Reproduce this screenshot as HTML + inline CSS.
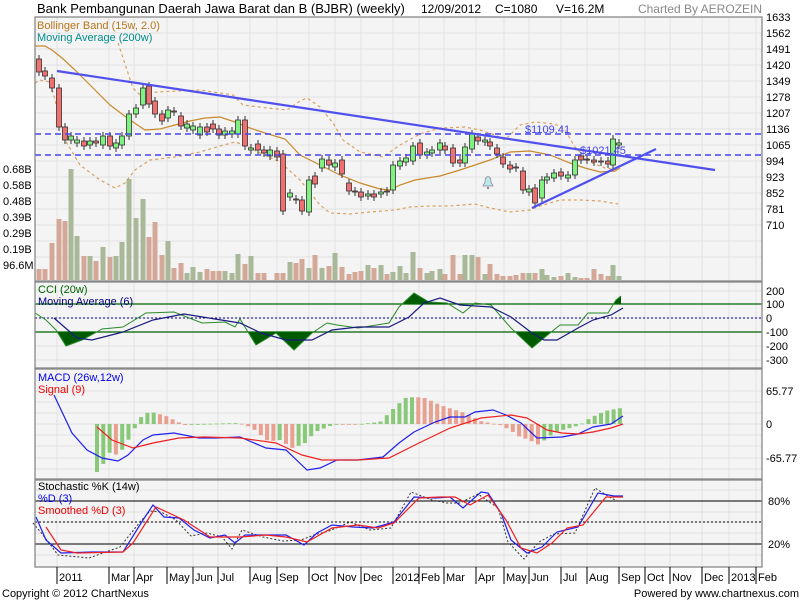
<!DOCTYPE html>
<html><head><meta charset="utf-8"><style>
html,body{margin:0;padding:0;background:#fff;width:800px;height:600px;overflow:hidden}
svg{display:block;font-family:"Liberation Sans",sans-serif}
</style></head><body>
<svg id="s" width="800" height="600" xmlns="http://www.w3.org/2000/svg"></svg>
<script>
var S=document.getElementById('s');var out=[];
function A(t){out.push(t);}
var L=35,R=762;
var P=[[17,281],[282,368],[369,479],[480,567]];
P.forEach(function(p){A('<rect x="'+L+'" y="'+p[0]+'" width="'+(R-L)+'" height="'+(p[1]-p[0])+'" fill="#f4f4f4"/>');});
var VG=[57,109,134,167,193,218,250,277,309,335,361,393,419,444,476,504,529,561,587,619,645,670,702,729,756];
VG.forEach(function(x){A('<line x1="'+x+'" y1="17" x2="'+x+'" y2="567" stroke="#e2e2e2" stroke-width="1"/>');});
for(var i=0;i<16;i++){var y=17+i*16;if(y<281)A('<line x1="'+L+'" y1="'+y+'" x2="'+R+'" y2="'+y+'" stroke="#e2e2e2"/>');}
[291,304,318,332,346,360].forEach(function(y){A('<line x1="'+L+'" y1="'+y+'" x2="'+R+'" y2="'+y+'" stroke="#e2e2e2"/>');});
[391,402,413,424,435,446,458,469].forEach(function(y){A('<line x1="'+L+'" y1="'+y+'" x2="'+R+'" y2="'+y+'" stroke="#e2e2e2"/>');});
[490,501,512,522,533,544,555].forEach(function(y){A('<line x1="'+L+'" y1="'+y+'" x2="'+R+'" y2="'+y+'" stroke="#e2e2e2"/>');});
function pl(pts,st,w,extra){return '<polyline fill="none" stroke="'+st+'" stroke-width="'+w+'" '+(extra||'')+' points="'+pts.map(function(p){return p.join(',')}).join(' ')+'"/>';}
var C=[[39,59,72,'r'],[45,71,76,'r'],[52,78,88,'r'],[59,88,127,'r'],[65,127,140,'r'],[71,136,140,'g'],[77,140,143,'g'],[84,141,146,'r'],[90,141,145,'g'],[96,141,143,'r'],[103,136,145,'g'],[110,136,146,'r'],[116,143,148,'g'],[122,136,145,'g'],[129,114,136,'g'],[136,108,114,'g'],[143,88,105,'g'],[149,86,104,'r'],[155,101,114,'r'],[162,114,121,'r'],[168,110,118,'g'],[174,111,112,'r'],[181,116,126,'r'],[187,124,128,'g'],[193,126,130,'g'],[200,127,135,'g'],[207,127,132,'r'],[213,124,129,'r'],[219,129,135,'r'],[225,131,135,'g'],[232,131,134,'g'],[238,120,134,'g'],[245,120,146,'r'],[251,148,150,'g'],[258,144,150,'r'],[264,150,153,'r'],[270,150,156,'g'],[277,151,157,'r'],[283,154,211,'r'],[290,193,197,'g'],[296,199,200,'r'],[302,200,211,'r'],[309,180,212,'g'],[315,176,184,'r'],[322,159,168,'g'],[329,160,165,'r'],[335,163,167,'g'],[342,160,174,'r'],[349,183,191,'r'],[355,191,192,'r'],[361,192,197,'r'],[368,194,196,'g'],[374,194,197,'r'],[381,192,194,'g'],[387,191,192,'r'],[393,165,190,'g'],[400,161,166,'g'],[406,158,162,'g'],[413,146,161,'g'],[420,143,155,'r'],[427,152,155,'g'],[432,150,153,'g'],[440,143,150,'g'],[445,146,150,'r'],[453,148,163,'r'],[460,160,163,'r'],[465,147,163,'g'],[472,134,149,'g'],[478,137,141,'r'],[485,140,142,'g'],[490,142,146,'r'],[497,148,154,'r'],[503,157,164,'r'],[510,165,169,'r'],[516,167,168,'r'],[523,171,190,'r'],[529,189,192,'g'],[535,188,203,'r'],[542,180,198,'g'],[547,177,180,'g'],[554,173,178,'g'],[561,172,176,'r'],[568,175,178,'g'],[575,160,175,'g'],[581,156,160,'r'],[587,159,160,'r'],[594,160,162,'r'],[601,161,162,'r'],[608,161,164,'r'],[613,139,165,'g'],[619,143,145,'g']];
var V={39:269,45:269,52:243,59:219,65:221,71:169,77:236,84:256,90:256,96:261,103:247,110:257,116:256,122:242,129:179,136:218,143:199,149:237,155:222,162:255,168:241,174:268,181:263,187:273,193:267,200:272,207:269,213:271,219:271,225:271,232:273,238:254,245:264,251:256,258:273,264:273,277:273,283:273,290:262,296:263,302:259,309:268,315:255,322:268,329:266,335:253,342:267,349:274,355:272,361:271,368:265,374:268,381:265,387:274,393:272,400:266,406:273,413:252,420:268,427:273,432:271,440:269,445:274,453:255,460:274,465:255,472:255,478:257,485:274,490:264,497:274,503:276,510:276,516:275,523:273,529:273,535:273,542:269,547:275,554:277,561:276,568:273,575:277,581:278,587:278,594:269,601:274,608:276,613:265,619:276};
C.forEach(function(c){var t=V[c[0]];if(t){A('<rect x="'+(c[0]-2.5)+'" y="'+t+'" width="5" height="'+(280-t)+'" fill="'+(c[3]=='g'?'#a8b898':'#d4a898')+'"/>');}});
var mid=[[35,46],[45,46],[52,50],[62,58],[75,70],[90,85],[110,105],[130,120],[145,130],[160,129],[175,125],[190,121],[205,118],[220,117],[235,122],[250,128],[265,133],[285,139],[300,155],[320,165],[340,175],[360,183],[380,189],[390,190],[400,185],[415,180],[440,176],[460,170],[475,165],[490,160],[510,152],[530,151],[550,155],[570,163],[585,168],[600,172],[615,171],[620,168]];
A(pl(mid,'#c8892c',1.2));
var low=[[35,83],[40,80],[50,82],[55,100],[65,140],[80,165],[100,180],[115,188],[125,183],[135,170],[150,160],[175,157],[200,152],[220,146],[235,142],[245,145],[260,153],[280,162],[300,180],[320,205],[330,213],[350,214],[370,212],[395,210],[410,207],[430,206],[450,206],[475,204],[490,208],[510,212],[530,210],[540,206],[560,200],[580,200],[600,201],[618,204]];
A(pl(low,'#d9a060',1.2,'stroke-dasharray="3,3"'));
var up=[[118,43],[127,70],[133,88],[140,95],[157,92],[200,90],[233,95],[243,105],[267,108],[287,110],[300,101],[307,98],[320,107],[333,123],[343,140],[360,152],[383,157],[400,145],[420,134],[440,128],[465,127],[480,130],[495,135],[505,140],[520,125],[535,122],[555,124],[565,130],[575,147],[590,162],[605,168],[620,170]];
A(pl(up,'#d9a060',1.2,'stroke-dasharray="3,3"'));
C.forEach(function(c){var x=c[0],a=c[1],b=c[2];A('<line x1="'+x+'" y1="'+(a-4)+'" x2="'+x+'" y2="'+(b+4)+'" stroke="#333"/>');A('<rect x="'+(x-2.5)+'" y="'+a+'" width="5" height="'+Math.max(1,b-a)+'" fill="'+(c[3]=='g'?'#80f080':'#f07070')+'" stroke="#333" stroke-width="0.8"/>');});
A('<line x1="'+L+'" y1="134" x2="'+R+'" y2="134" stroke="#4444ee" stroke-width="1.5" stroke-dasharray="6,4"/>');
A('<line x1="'+L+'" y1="155" x2="'+R+'" y2="155" stroke="#4444ee" stroke-width="1.5" stroke-dasharray="6,4"/>');
A('<line x1="57" y1="71" x2="715" y2="170" stroke="#5050ee" stroke-width="2.2"/>');
A('<line x1="532" y1="208" x2="656" y2="149" stroke="#5050ee" stroke-width="2.2"/>');
A('<text x="525" y="133" font-size="11" fill="#4444ee">$1109.41</text>');
A('<text x="580" y="154" font-size="11" fill="#4444ee">$1021.45</text>');
A('<path d="M483,186 L485,182 Q485,177 488,176.5 Q491,177 491,182 L493,186 Z" fill="#bde8ea" stroke="#889" stroke-width="0.8"/><circle cx="488" cy="188" r="1.2" fill="#889"/>');
A('<text x="37" y="29" font-size="11" fill="#b8761e">Bollinger Band (15w, 2.0)</text>');
A('<text x="37" y="41" font-size="11" fill="#008b8b">Moving Average (200w)</text>');
var cci=[[35,313],[46,320],[56,330],[66,346],[82,340],[95,333],[102,329],[123,327],[146,313],[174,312],[202,323],[225,322],[235,327],[240,319],[256,345],[276,333],[294,350],[312,333],[327,323],[337,325],[358,328],[389,323],[399,307],[414,293],[429,302],[447,303],[463,313],[475,303],[491,305],[511,328],[532,348],[550,333],[560,325],[578,325],[588,313],[608,313],[616,300],[621,296]];
A('<defs><clipPath id="ca"><rect x="35" y="282" width="727" height="22"/></clipPath><clipPath id="cb"><rect x="35" y="332" width="727" height="36"/></clipPath></defs>');
var cp=cci.map(function(p){return p.join(',')}).join(' ');
A('<polygon clip-path="url(#ca)" fill="#005a00" points="35,304 '+cp+' 621,304"/>');
A('<polygon clip-path="url(#cb)" fill="#005a00" points="35,332 '+cp+' 621,332"/>');
A('<line x1="'+L+'" y1="304" x2="'+R+'" y2="304" stroke="#006400" stroke-width="1.3"/>');
A('<line x1="'+L+'" y1="332" x2="'+R+'" y2="332" stroke="#006400" stroke-width="1.3"/>');
A('<line x1="'+L+'" y1="318" x2="'+R+'" y2="318" stroke="#000080" stroke-dasharray="2,2"/>');
A(pl(cci,'#2a8a2a',1));
A(pl([[54,318],[77,338],[92,340],[123,332],[153,320],[184,314],[215,319],[240,323],[261,333],[286,340],[312,340],[332,330],[358,327],[389,327],[409,317],[424,303],[440,298],[460,305],[491,307],[511,317],[532,333],[544,340],[557,340],[578,328],[593,320],[611,315],[623,308]],'#1a1a80',1.2));
A('<text x="38" y="293" font-size="11" fill="#006400">CCI (20w)</text>');
A('<text x="38" y="305" font-size="11" fill="#000080">Moving Average (6)</text>');
var hk=[[97,472],[104,463],[110,452],[117,455],[124,448],[130,437],[136,426],[140,418],[146,413],[152,412],[159,414],[166,416],[172,419],[178,422],[185,425],[200,424],[240,423],[250,427],[258,432],[265,440],[272,441],[280,440],[292,448],[298,446],[305,443],[315,432],[325,428],[335,424],[360,424],[380,422],[392,410],[405,398],[415,397],[425,398],[440,405],[452,409],[465,413],[480,421],[500,425],[510,430],[520,437],[530,440],[537,445],[545,440],[555,432],[570,428],[580,425],[590,418],[605,411],[621,408]];
function hv(x){for(var i=0;i<hk.length-1;i++){if(x>=hk[i][0]&&x<=hk[i+1][0]){var t=(x-hk[i][0])/(hk[i+1][0]-hk[i][0]);return hk[i][1]+t*(hk[i+1][1]-hk[i][1]);}}return 424;}
var prev=null;for(var x=97;x<=622;x+=6.3){var y=hv(x);var d=424-y;var green=prev===null?true:(d>prev);prev=d;A('<rect x="'+(x-2)+'" y="'+Math.min(y,424)+'" width="4" height="'+Math.max(0.8,Math.abs(424-y))+'" fill="'+(green?'#88c878':'#e8a090')+'"/>');}
A(pl([[54,395],[72,433],[87,450],[102,458],[118,461],[128,455],[143,440],[153,435],[174,433],[199,438],[215,438],[240,437],[266,448],[286,450],[307,470],[320,468],[337,460],[358,460],[383,457],[399,443],[414,432],[435,422],[450,417],[465,417],[475,412],[493,410],[506,415],[521,423],[537,438],[562,437],[578,434],[593,427],[611,424],[623,416]],'#2020ee',1.2));
A(pl([[97,427],[112,440],[133,448],[153,443],[179,438],[204,437],[240,438],[276,443],[302,455],[322,460],[358,460],[389,458],[419,443],[450,428],[481,418],[511,415],[527,418],[547,430],[562,433],[578,434],[593,432],[611,428],[623,424]],'#ee2020',1.2));
A('<text x="38" y="381" font-size="11" fill="#0000ee">MACD (26w,12w)</text>');
A('<text x="38" y="393" font-size="11" fill="#ee0000">Signal (9)</text>');
A('<line x1="'+L+'" y1="501" x2="'+R+'" y2="501" stroke="#000" stroke-width="1"/>');
A('<line x1="'+L+'" y1="544" x2="'+R+'" y2="544" stroke="#000" stroke-width="1"/>');
A('<line x1="'+L+'" y1="522" x2="'+R+'" y2="522" stroke="#000" stroke-dasharray="2,2"/>');
var bl=[[36,517],[46,540],[61,553],[92,552],[123,552],[143,520],[153,505],[164,517],[179,518],[194,530],[210,538],[225,535],[235,543],[245,535],[266,535],[286,535],[304,545],[317,533],[332,525],[353,527],[373,528],[394,522],[414,497],[435,498],[450,497],[463,508],[481,492],[488,493],[501,513],[511,540],[527,553],[542,547],[557,532],[578,527],[598,493],[614,496],[623,496]];
var kl=bl.map(function(p,i){return [p[0]-3,p[1]+((i%3==0)?6:(i%3==1?-5:2))];});
A(pl(kl,'#333',1,'stroke-dasharray="2,2"'));
A(pl(bl,'#2020ee',1.2));
A(pl([[46,527],[61,550],[77,553],[123,552],[133,543],[156,507],[184,520],[210,537],[240,537],[266,535],[286,537],[307,542],[332,528],[358,525],[378,528],[394,523],[419,498],[440,497],[455,497],[470,505],[488,495],[506,520],[521,548],[537,553],[552,543],[567,528],[583,525],[606,497],[623,497]],'#ee2020',1.2));
A('<text x="38" y="490" font-size="11" fill="#000">Stochastic %K (14w)</text>');
A('<text x="38" y="502" font-size="11" fill="#0000ee">%D (3)</text>');
A('<text x="38" y="514" font-size="11" fill="#ee0000">Smoothed %D (3)</text>');
P.forEach(function(p){A('<rect x="'+L+'" y="'+p[0]+'" width="'+(R-L)+'" height="'+(p[1]-p[0])+'" fill="none" stroke="#888" stroke-width="1.3"/>');});
var pl1=[1633,1562,1491,1420,1349,1278,1207,1136,1065,994,923,852,781,710];
pl1.forEach(function(v,i){A('<text x="766" y="'+(21+i*16)+'" font-size="11" fill="#000">'+v+'</text>');});
[['0.68B',169],['0.58B',185],['0.48B',201],['0.39B',217],['0.29B',233],['0.19B',249],['96.6M',265]].forEach(function(a){A('<text x="3" y="'+(a[1]+4)+'" font-size="11" fill="#000">'+a[0]+'</text>');});
[['200',291],['100',304],['0',318],['-100',332],['-200',346],['-300',360]].forEach(function(a){A('<text x="766" y="'+(a[1]+4)+'" font-size="11" fill="#000">'+a[0]+'</text>');});
[['65.77',391],['0',424],['-65.77',458]].forEach(function(a){A('<text x="766" y="'+(a[1]+4)+'" font-size="11" fill="#000">'+a[0]+'</text>');});
[['80%',501],['20%',544]].forEach(function(a){A('<text x="768" y="'+(a[1]+4)+'" font-size="11" fill="#000">'+a[0]+'</text>');});
var XL=[['2011',57],['Mar',109],['Apr',134],['May',167],['Jun',193],['Jul',218],['Aug',250],['Sep',277],['Oct',309],['Nov',335],['Dec',361],['2012',393],['Feb',419],['Mar',444],['Apr',476],['May',504],['Jun',529],['Jul',561],['Aug',587],['Sep',619],['Oct',645],['Nov',670],['Dec',702],['2013',729],['Feb',756]];
XL.forEach(function(a){A('<line x1="'+a[1]+'" y1="567" x2="'+a[1]+'" y2="584" stroke="#000" stroke-width="1"/>');A('<text x="'+(a[1]+2)+'" y="581" font-size="11" fill="#000">'+a[0]+'</text>');});
A('<text x="37" y="13" font-size="13" fill="#000">Bank Pembangunan Daerah Jawa Barat dan B (BJBR) (weekly)</text>');
A('<text x="421" y="13" font-size="12" fill="#000">12/09/2012</text>');
A('<text x="495" y="13" font-size="12" fill="#000">C=1080</text>');
A('<text x="556" y="13" font-size="12" fill="#000">V=16.2M</text>');
A('<text x="762" y="13" font-size="12" fill="#888" text-anchor="end">Charted By AEROZEIN</text>');
A('<text x="2" y="597" font-size="11" fill="#000">Copyright © 2012 ChartNexus</text>');
A('<text x="799" y="597" font-size="11" fill="#000" text-anchor="end">Powered by www.chartnexus.com</text>');
S.innerHTML=out.join('');
</script>
</body></html>
